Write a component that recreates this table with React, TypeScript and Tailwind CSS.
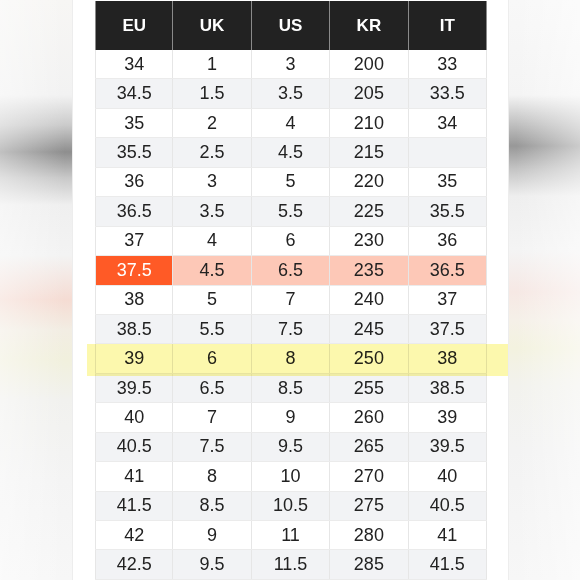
const HEADERS = ["EU", "UK", "US", "KR", "IT"];

const ROWS: string[][] = [
  ["34", "1", "3", "200", "33"],
  ["34.5", "1.5", "3.5", "205", "33.5"],
  ["35", "2", "4", "210", "34"],
  ["35.5", "2.5", "4.5", "215", ""],
  ["36", "3", "5", "220", "35"],
  ["36.5", "3.5", "5.5", "225", "35.5"],
  ["37", "4", "6", "230", "36"],
  ["37.5", "4.5", "6.5", "235", "36.5"],
  ["38", "5", "7", "240", "37"],
  ["38.5", "5.5", "7.5", "245", "37.5"],
  ["39", "6", "8", "250", "38"],
  ["39.5", "6.5", "8.5", "255", "38.5"],
  ["40", "7", "9", "260", "39"],
  ["40.5", "7.5", "9.5", "265", "39.5"],
  ["41", "8", "10", "270", "40"],
  ["41.5", "8.5", "10.5", "275", "40.5"],
  ["42", "9", "11", "280", "41"],
  ["42.5", "9.5", "11.5", "285", "41.5"],
];

// row that is marked on the chart
const MARKED = "37.5";

export default function App() {
  return (
    <div className="relative flex h-[580px] w-[580px] overflow-hidden bg-white font-['Liberation_Sans',Arial,sans-serif]">
      {/* blurred backdrop, left */}
      <div className="w-[73px] shrink-0 border-r border-[#ededed] bg-[image:linear-gradient(to_right,rgba(255,255,255,0.45),rgba(255,255,255,0)_90%),linear-gradient(to_bottom,#f7f6f4_0px,#f2f2f2_95px,#cbcbcb_125px,#8e8e8e_152px,#c9c9c9_178px,#efefef_205px,#f3f3f3_255px,#f5dcd3_300px,#f2ede3_330px,#f1f0dd_360px,#f1f1ee_400px,#f4f4f4_480px,#f7f7f7_580px)]" />

      <div className="w-[22px] shrink-0" />

      {/* size chart */}
      <div className="flex w-[392px] shrink-0 flex-col pt-px">
        <div className="grid h-[49px] grid-cols-5 bg-[#222222]">
          {HEADERS.map((h, i) => (
            <div
              key={h}
              className={
                "flex items-center justify-center text-[17px] font-bold text-white " +
                (i === 0 ? "border-x border-[#8a8a8a]" : "border-r border-[#8a8a8a]")
              }
            >
              {h}
            </div>
          ))}
        </div>

        {ROWS.map((row, r) => {
          const marked = row[0] === MARKED;
          const rowBg = marked ? "bg-[#fdc8b7]" : r % 2 === 0 ? "bg-white" : "bg-[#f2f3f5]";
          return (
            <div key={row[0]} className={"grid h-[29.44px] grid-cols-5 border-b border-[#ebebeb] " + rowBg}>
              {row.map((cell, c) => (
                <div
                  key={c}
                  className={
                    "flex items-center justify-center text-[18px] " +
                    (c === 0 ? "border-x border-[#e6e6e6] " : "border-r border-[#e6e6e6] ") +
                    (marked && c === 0 ? "bg-[#ff5a26] text-white" : "text-[#222222]")
                  }
                >
                  {cell}
                </div>
              ))}
            </div>
          );
        })}
      </div>

      <div className="w-[21px] shrink-0" />

      {/* blurred backdrop, right */}
      <div className="flex-1 border-l border-[#ededed] bg-[image:linear-gradient(to_left,rgba(255,255,255,0.5),rgba(255,255,255,0)_90%),linear-gradient(to_bottom,#f8f8f8_0px,#f4f4f4_95px,#c4c4c4_122px,#989898_146px,#c6c6c6_170px,#eeeeee_196px,#f4f4f4_250px,#f6e8e4_292px,#f5f0e8_320px,#f3f2df_348px,#f2f2ed_385px,#f3f3f3_450px,#f7f7f7_580px)]" />

      {/* yellow marker stroke over the 39 row */}
      <div className="pointer-events-none absolute left-[87px] top-[344px] h-[32px] w-[421px] bg-[#fcf8ad] mix-blend-multiply" />
    </div>
  );
}
